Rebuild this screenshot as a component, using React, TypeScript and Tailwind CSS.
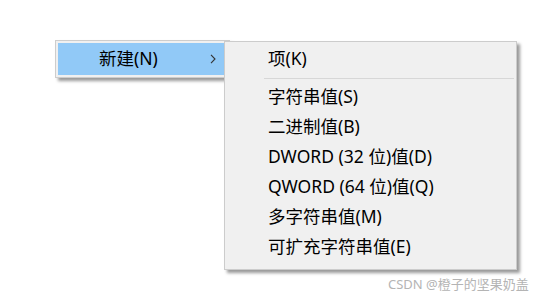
const items = [
  "字符串值(S)",
  "二进制值(B)",
  "DWORD (32 位)值(D)",
  "QWORD (64 位)值(Q)",
  "多字符串值(M)",
  "可扩充字符串值(E)",
];

function Chevron() {
  return (
    <svg width="6" height="10" viewBox="0 0 6 10" className="text-[#333]">
      <path d="M1 0.8 L5 5 L1 9.2" fill="none" stroke="currentColor" strokeWidth="1.1" />
    </svg>
  );
}

export default function App() {
  return (
    <div className="relative w-[542px] h-[300px] bg-white overflow-hidden font-['Noto_Sans','Noto_Sans_CJK_SC',sans-serif] text-black">
      {/* parent menu */}
      <div className="absolute left-[55px] top-[40px] w-[175px] h-[38px] bg-[#f0f0f0] border border-[#cdcdcd] p-[2px] shadow-[3px_3px_3px_rgba(0,0,0,0.4)]">
        <div className="h-[32px] bg-[#91c9f7] flex items-center pl-[41px] text-[17.5px] leading-none">
          <span>新建(N)</span>
          <span className="ml-auto mr-[11px] flex items-center">
            <Chevron />
          </span>
        </div>
      </div>

      {/* submenu */}
      <div className="absolute left-[224px] top-[41px] w-[293px] bg-[#f0f0f0] border border-[#cccccc] pt-[2px] pb-[7px] shadow-[3px_3px_3px_rgba(0,0,0,0.4)]">
        <div className="h-[30px] flex items-center pl-[43px] text-[17.5px] leading-none">项(K)</div>
        <div className="h-[8px] flex items-center ml-[39px] mr-[2px]">
          <div className="h-px w-full bg-[#d7d7d7]" />
        </div>
        {items.map((t) => (
          <div key={t} className="h-[30px] flex items-center pl-[43px] text-[17.5px] leading-none">
            {t}
          </div>
        ))}
      </div>

      <div className="absolute left-[388px] top-[276px] text-[13px] leading-[16px] text-[#b4b4b4]">
        CSDN @橙子的坚果奶盖
      </div>
    </div>
  );
}
